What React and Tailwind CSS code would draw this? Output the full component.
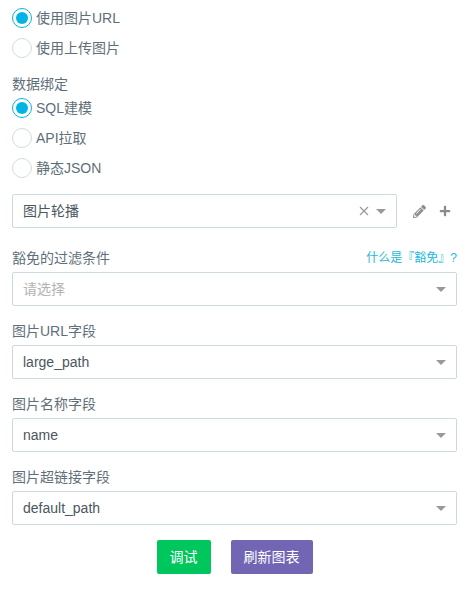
import { FaPencilAlt, FaPlus } from "react-icons/fa";

const FONT = "font-['Liberation_Sans','Noto_Sans_CJK_SC',sans-serif]";

function Radio({ checked, label }) {
  return (
    <label className="flex h-[30px] items-center gap-1 text-[14px] text-[#5f6f7a]">
      <span className={`flex h-5 w-5 items-center justify-center rounded-full border bg-white ${checked ? "border-[#00b5e5]" : "border-[#cfdde2]"}`}>
        {checked && <span className="h-3 w-3 rounded-full bg-[#00b5e5]" />}
      </span>
      <span>{label}</span>
    </label>
  );
}

function Caret({ className = "" }) {
  return <span className={`h-0 w-0 border-x-[5.5px] border-t-[5.5px] border-x-transparent border-t-[#999999] ${className}`} />;
}

function Select({ value, placeholder }) {
  return (
    <div className="flex h-[34px] items-center justify-between rounded-[2px] border border-[#cbdadf] bg-white pl-[10px] pr-[10px] text-[14px]">
      <span className={placeholder ? "text-[#b3b3b3]" : "text-[#4a5660]"}>{value || placeholder}</span>
      <Caret />
    </div>
  );
}

function Field({ label, extra, value, placeholder }) {
  return (
    <div className="flex flex-col">
      <div className="flex h-[20px] items-center justify-between text-[14px] text-[#5f6f7a]">
        <span>{label}</span>
        {extra && <a className="text-[12px] text-[#22b8dc]">{extra}</a>}
      </div>
      <div className="mt-[4px]"><Select value={value} placeholder={placeholder} /></div>
    </div>
  );
}

export default function App() {
  return (
    <div className={`${FONT} h-[591px] w-[466px] overflow-hidden bg-white pl-3 pr-[9px] pt-[3px]`}>
      <Radio checked label="使用图片URL" />
      <Radio label="使用上传图片" />
      <div className="mt-[12px] flex h-[18px] items-center text-[14px] text-[#5f6f7a]">数据绑定</div>
      <Radio checked label="SQL建模" />
      <Radio label="API拉取" />
      <Radio label="静态JSON" />
      <div className="mt-[11px] flex items-center">
        <div className="flex h-[34px] w-[385px] items-center justify-between rounded-[2px] border border-[#cbdadf] bg-white pl-[10px] pr-[10px] text-[14px]">
          <span className="text-[#4a5660]">图片轮播</span>
          <span className="flex items-center gap-[7px]">
            <svg width="10" height="10" viewBox="0 0 10 10" className="text-[#999999]"><path d="M1 1l8 8M9 1l-8 8" stroke="currentColor" strokeWidth="1.2" fill="none" /></svg>
            <Caret />
          </span>
        </div>
        <FaPencilAlt className="ml-[16px] h-[13px] w-[13px] text-[#8f8f8f]" />
        <FaPlus className="ml-[13px] h-[12px] w-[12px] text-[#8a8a8a]" />
      </div>
      <div className="mt-[20px] flex flex-col gap-[15px]">
        <Field label="豁免的过滤条件" extra="什么是『豁免』?" placeholder="请选择" />
        <Field label="图片URL字段" value="large_path" />
        <Field label="图片名称字段" value="name" />
        <Field label="图片超链接字段" value="default_path" />
      </div>
      <div className="mt-[15px] flex justify-center gap-5 text-[14px] text-white">
        <button className="h-[34px] w-[54px] rounded-[2px] bg-[#00c65e]">调试</button>
        <button className="h-[34px] w-[82px] rounded-[2px] bg-[#7266b4]">刷新图表</button>
      </div>
    </div>
  );
}
